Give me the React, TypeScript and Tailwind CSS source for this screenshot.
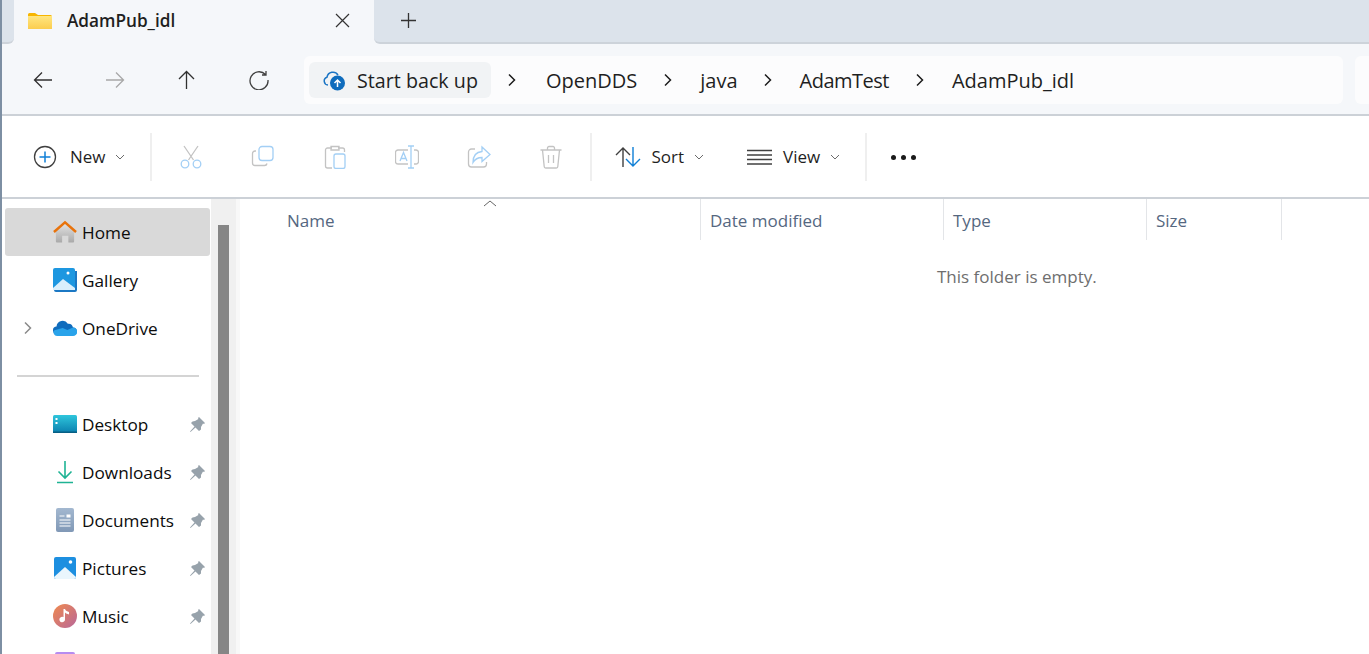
import React from "react";

const Chevron = () => (
  <svg width="10" height="6" viewBox="0 0 10 6" fill="none" stroke="#6b6b6b" strokeWidth="1" className="shrink-0">
    <path d="M1 1l4 4 4-4" />
  </svg>
);

const Crumb = ({ label, className }: { label: string; className: string }) => (
  <>
    <svg width="10" height="16" viewBox="0 0 10 16" fill="none" stroke="#1c1c1c" strokeWidth="1.5" className="shrink-0">
      <path d="M2 2.5l5.5 5.5L2 13.5" />
    </svg>
    <span className={className}>{label}</span>
  </>
);

const Pin = () => (
  <svg width="17" height="17" viewBox="0 0 17 17" fill="#97a2ab" className="ml-auto mr-[4px] shrink-0">
    <path d="M10 1l6 6-1 1-1-.4-2 3.400v2.500L10 15l-3.500-3.500-5 4.500-.5-.5 4.500-5L2 7l1.500-1.500L6 5l3.400-2L9 2z" />
  </svg>
);

const SideRow = ({ icon, label, active, caret, pin }: { icon: React.ReactNode; label?: string; active?: boolean; caret?: boolean; pin?: boolean }) => (
  <div className={`h-12 flex items-center ml-[3px] mr-px rounded-[3px] ${active ? "bg-[#d9d9d9]" : ""}`}>
    <div className="w-[47px] flex justify-center shrink-0">
      {caret && (
        <svg width="10" height="14" viewBox="0 0 10 14" fill="none" stroke="#8a8a8a" strokeWidth="1.500" className="-ml-[2px]">
          <path d="M2 1.500l5.500 5.500L2 12.500" />
        </svg>
      )}
    </div>
    <div className="w-[26px] h-[24px] flex items-center justify-center shrink-0">{icon}</div>
    {label && <span className="ml-[4px] pt-px text-[17.200px] text-[#0c0c0c]">{label}</span>}
    {pin && <Pin />}
  </div>
);

const HomeIcon = () => (
  <svg width="24" height="24" viewBox="0 0 25 24">
    <defs>
      <linearGradient id="hm" x1="0" y1="0" x2="0" y2="1">
        <stop offset="0" stopColor="#e3e3e3" />
        <stop offset="1" stopColor="#a9a9a9" />
      </linearGradient>
    </defs>
    <path d="M3 11L12.500 3 22 11v11a1 1 0 0 1-1 1h-5v-7H9.500v7H4a1 1 0 0 1-1-1z" fill="url(#hm)" />
    <path d="M1 12L12.500 2 24 12" fill="none" stroke="#e8730c" strokeWidth="2.600" />
  </svg>
);

const GalleryIcon = () => (
  <svg width="24" height="24" viewBox="0 0 24 24">
    <path d="M22 3h2v19a2 2 0 0 1-2 2H3a2 2 0 0 1-2-2h21z" fill="#1b78c4" />
    <path d="M0 2a2 2 0 0 1 2-2h18a2 2 0 0 1 2 2v20H0z" fill="#1d97e0" />
    <path d="M0 20l10-9 12 9v2H0z" fill="#d9effc" />
    <circle cx="15" cy="5" r="1.500" fill="#fff" />
  </svg>
);

const CloudIcon = () => (
  <svg width="24" height="16" viewBox="0 0 25 17">
    <path d="M4 15a4 4 0 0 1-.5-8A6.500 6.500 0 0 1 15.500 4 5 5 0 0 1 21 8a4 4 0 0 1 0 8z" fill="#0f6cbd" />
    <path d="M4 17a3.800 3.800 0 0 1-2.800-6.200L10 8.500l5 2 6-2.500a4.500 4.500 0 0 1 0 9z" fill="#29a3ea" />
  </svg>
);

const DesktopIcon = () => (
  <svg width="24" height="18" viewBox="0 0 24 18">
    <defs>
      <linearGradient id="dk" x1="0" y1="0" x2="0" y2="1">
        <stop offset="0" stopColor="#2fc6dc" />
        <stop offset="1" stopColor="#0a7fae" />
      </linearGradient>
    </defs>
    <rect width="24" height="18" rx="1.500" fill="url(#dk)" />
    <rect x="2.500" y="3" width="2" height="2" fill="#fff" />
    <rect x="2.500" y="7" width="2" height="2" fill="#fff" />
    <rect y="16.500" width="24" height="1.500" fill="#075f84" />
  </svg>
);

const DownloadIcon = () => (
  <svg width="18" height="24" viewBox="0 0 18 24" fill="none" stroke="#1fb394" strokeWidth="1.600">
    <path d="M9 1v17M2.500 11.500L9 18l6.500-6.500M1 22.500h16" />
  </svg>
);

const DocumentIcon = () => (
  <svg width="18" height="24" viewBox="0 0 18 24">
    <defs>
      <linearGradient id="dc" x1="0" y1="0" x2="0" y2="1">
        <stop offset="0" stopColor="#a3b8d0" />
        <stop offset="1" stopColor="#8098b6" />
      </linearGradient>
    </defs>
    <rect width="18" height="24" rx="2" fill="url(#dc)" />
    <path d="M3.500 8h5M3.500 12h11M3.500 15h11M3.500 18h11" stroke="#fff" strokeWidth="1" />
    <rect x="10.500" y="6.500" width="4" height="3" fill="#fff" />
  </svg>
);

const PicturesIcon = () => (
  <svg width="22" height="22" viewBox="0 0 22 22">
    <rect width="22" height="22" rx="2" fill="#1d8fe0" />
    <path d="M0 20l11-10 11 10a2 2 0 0 1-2 2H2a2 2 0 0 1-2-2z" fill="#eaf6fd" />
    <circle cx="16.500" cy="5" r="1.800" fill="#fff" />
  </svg>
);

const MusicIcon = () => (
  <svg width="24" height="24" viewBox="0 0 24 24">
    <defs>
      <linearGradient id="ms" x1="0" y1="0" x2="1" y2="1">
        <stop offset="0" stopColor="#f08a4e" />
        <stop offset="1" stopColor="#b8679a" />
      </linearGradient>
    </defs>
    <circle cx="12" cy="12" r="12" fill="url(#ms)" />
    <path d="M12 5v10.500a2.800 2.800 0 1 1-1.500-2.500V5zM12 5c.5 2 2.500 2.500 4 3v2.500c-1.500-.5-3-1-4-2z" fill="#fff" />
  </svg>
);

const VideosIcon = () => <div className="w-[20px] h-[24px] rounded-[2px] bg-[#b68cf0]" />;

const ToolIcon = ({ children }: { children: React.ReactNode }) => (
  <div className="w-[72px] flex justify-center shrink-0">
    <svg width="24" height="24" viewBox="0 0 24 24" fill="none" strokeWidth="1.300">
      {children}
    </svg>
  </div>
);

const NavButton = ({ children }: { children: React.ReactNode }) => (
  <div className="w-[72px] flex justify-center shrink-0">
    <svg width="20" height="20" viewBox="0 0 20 20" fill="none" strokeWidth="1.300">
      {children}
    </svg>
  </div>
);

const Divider = () => <div className="w-[2px] h-[48px] bg-[#efefef] shrink-0" />;

const App = () => {
  return (
    <div
      className="w-[1369px] h-[654px] overflow-hidden flex flex-col bg-white border-l-2 border-[#7d8fa3]"
      style={{ fontFamily: '"Open Sans", "Noto Sans", sans-serif' }}
    >
      {/* Tabs */}
      <div className="h-[44px] shrink-0 bg-[#f5f7fa] flex items-stretch">
        <div className="w-[12px] shrink-0 bg-[#dce3eb] border-b-2 border-[#cdd3da] rounded-br-[6px]" />
        <div className="w-[360px] bg-[#f5f7fa] rounded-t-[8px] flex items-center pl-[14px] pr-[24px] pb-[3px] shrink-0">
          <svg width="24" height="16" viewBox="0 0 24 16" className="shrink-0">
            <defs>
              <linearGradient id="fd" x1="0" y1="0" x2="0" y2="1">
                <stop offset="0" stopColor="#ffe680" />
                <stop offset="1" stopColor="#fbcd4e" />
              </linearGradient>
            </defs>
            <path d="M0 1.500A1.500 1.500 0 0 1 1.500 0h5.500l3 2h12.500A1.500 1.500 0 0 1 24 3.500V16H0z" fill="#f7b500" />
            <rect y="3" width="24" height="13" fill="url(#fd)" />
          </svg>
          <span className="ml-[15px] text-[17.200px] font-semibold text-[#1f1f1f]">AdamPub_idl</span>
          <svg width="15" height="15" viewBox="0 0 15 15" stroke="#333" strokeWidth="1.200" className="ml-auto">
            <path d="M1 1l13 13M14 1L1 14" />
          </svg>
        </div>
        <div className="flex-1 bg-[#dce3eb] border-b-2 border-[#cdd3da] rounded-bl-[6px] pl-[27px] pt-[13px]">
          <svg width="15" height="15" viewBox="0 0 15 15" stroke="#333" strokeWidth="1.300">
            <path d="M7.500 0v15M0 7.500h15" />
          </svg>
        </div>
      </div>

      {/* Navigation row */}
      <div className="h-[72px] shrink-0 bg-[#f5f7fa] border-b-2 border-[#ccd1d7] flex items-center pl-[5px] pt-[2px]">
        <NavButton>
          <path d="M19 10H1.500M9 2.500L1.500 10 9 17.500" stroke="#303030" />
        </NavButton>
        <NavButton>
          <path d="M1 10h17.500M11 2.500l7.500 7.500-7.500 7.500" stroke="#a8a8a8" />
        </NavButton>
        <NavButton>
          <path d="M9.500 19V1.500M2 9l7.500-7.500L17 9" stroke="#303030" />
        </NavButton>
        <NavButton>
          <path d="M16.500 4.500A9 9 0 1 0 19 10M17 1v4h-4" stroke="#404040" />
        </NavButton>
        <div className="ml-[9px] w-[1039px] h-[48px] bg-[#fcfcfd] rounded-[6px] flex items-center pl-[5px] shrink-0">
          <div className="w-[182px] h-[36px] bg-[#f1f3f5] rounded-[6px] flex items-center pl-[13px] shrink-0">
            <svg width="24" height="22" viewBox="0 0 24 22" fill="none" className="shrink-0">
              <path d="M6 16a4 4 0 0 1-1-7.800A6 6 0 0 1 16 6" stroke="#1a74c4" strokeWidth="1.500" />
              <circle cx="15.500" cy="14" r="7.500" fill="#0f6cbd" />
              <path d="M15.500 18v-7M12.500 14l3-3 3 3" stroke="#fff" strokeWidth="1.500" />
            </svg>
            <span className="ml-[11px] pt-px text-[19.700px] text-[#1f1f1f] whitespace-nowrap">Start back up</span>
          </div>
          <div className="ml-[16px] flex items-center text-[20px] text-[#1f1f1f] whitespace-nowrap">
            <Crumb label="OpenDDS" className="ml-[29px] mr-[26px] pt-px" />
            <Crumb label="java" className="ml-[27px] mr-[25px] pt-px" />
            <Crumb label="AdamTest" className="ml-[27px] mr-[26px] pt-px tracking-[-0.5px]" />
            <Crumb label="AdamPub_idl" className="ml-[27px] pt-px" />
          </div>
        </div>
        <div className="ml-[12px] w-[60px] h-[48px] bg-[#fcfcfd] rounded-[6px] shrink-0" />
      </div>

      {/* Command bar */}
      <div className="h-[83px] shrink-0 bg-white border-b-2 border-[#ccd1d7] flex items-center pl-[31px] pt-px text-[17px] text-[#1f1f1f]">
        <svg width="24" height="24" viewBox="0 0 24 24" fill="none" className="shrink-0">
          <circle cx="12" cy="12" r="10.500" stroke="#404040" strokeWidth="1.300" />
          <path d="M12 6.500v11M6.500 12h11" stroke="#0f7fd6" strokeWidth="1.500" />
        </svg>
        <span className="ml-[13px]">New</span>
        <div className="ml-[9px] mr-[25px] flex"><Chevron /></div>
        <Divider />
        <div className="ml-[3px] flex items-center">
          <ToolIcon>
            <g stroke="#c3c3c3"><path d="M5 1l9.500 14M19 1L9.500 15" /></g>
            <g stroke="#a3cff5"><circle cx="6" cy="19" r="3.800" /><circle cx="18" cy="19" r="3.800" /></g>
          </ToolIcon>
          <ToolIcon>
            <path d="M5 6H4a2.500 2.500 0 0 0-2.500 2.500V18A2.500 2.500 0 0 0 4 20.500h9.500a2.500 2.500 0 0 0 2.500-2" stroke="#c3c3c3" />
            <rect x="8" y="1.500" width="14" height="14" rx="3" stroke="#a3cff5" />
          </ToolIcon>
          <ToolIcon>
            <path d="M9 3H4.500A2 2 0 0 0 2.500 5v16a2 2 0 0 0 2 2H9M15 3h4.500a2 2 0 0 1 2 2v2M8 1.500h8V5H8z" stroke="#c3c3c3" />
            <rect x="11" y="9" width="11" height="14.500" rx="2" stroke="#a3cff5" />
          </ToolIcon>
          <ToolIcon>
            <path d="M13 5H3a2.500 2.500 0 0 0-2.500 2.500v9A2.500 2.500 0 0 0 3 19h10M19 5h2a2.500 2.500 0 0 1 2.500 2.500v9A2.500 2.500 0 0 1 21 19h-2" stroke="#c3c3c3" />
            <path d="M13 1h6M13 23h6M16 1v22M5 16l3.500-8.500L12 16M6.200 13.500h4.600" stroke="#a3cff5" />
          </ToolIcon>
          <ToolIcon>
            <path d="M8 4H4.500A3 3 0 0 0 1.500 7v12a3 3 0 0 0 3 3h12a3 3 0 0 0 3-3v-2" stroke="#c3c3c3" />
            <path d="M15 2l8 7.500-8 7v-4c-5 0-7 1.500-9 5 0-6 3-10.500 9-11z" stroke="#a3cff5" />
          </ToolIcon>
          <ToolIcon>
            <path d="M1.500 5h21M8.500 5V3a1.500 1.500 0 0 1 1.500-1.500h4A1.500 1.500 0 0 1 15.500 3v2M3.500 5l1.700 16.500a1.500 1.500 0 0 0 1.500 1.500h10.600a1.500 1.500 0 0 0 1.500-1.500L20.500 5M9.500 10v8M14.500 10v8" stroke="#c3c3c3" />
          </ToolIcon>
        </div>
        <div className="ml-[3px]"><Divider /></div>
        <svg width="26" height="22" viewBox="0 0 26 22" fill="none" strokeWidth="1.400" className="ml-[23px] shrink-0">
          <path d="M8 21V2M1 9l7-7 7 7" stroke="#404040" />
          <path d="M18 1v19M11 13l7 7 7-7" stroke="#0f7fd6" />
        </svg>
        <span className="ml-[11px] mr-px">Sort</span>
        <div className="ml-[9px] flex"><Chevron /></div>
        <svg width="25" height="16" viewBox="0 0 25 16" stroke="#404040" strokeWidth="1.300" className="ml-[43px] shrink-0">
          <path d="M0 1.500h25M0 6h25M0 10.500h25M0 15h25" />
        </svg>
        <span className="ml-[11px]">View</span>
        <div className="ml-[10px] mr-[25px] flex"><Chevron /></div>
        <Divider />
        <div className="ml-[24px] flex gap-[5px]">
          <div className="w-[5px] h-[5px] rounded-full bg-[#1a1a1a]" />
          <div className="w-[5px] h-[5px] rounded-full bg-[#1a1a1a]" />
          <div className="w-[5px] h-[5px] rounded-full bg-[#1a1a1a]" />
        </div>
      </div>

      <div className="flex-1 flex min-h-0">
        {/* Sidebar */}
        <div className="w-[209px] shrink-0 pt-[9px] bg-white overflow-hidden">
          <SideRow icon={<HomeIcon />} label="Home" active />
          <SideRow icon={<GalleryIcon />} label="Gallery" />
          <SideRow icon={<CloudIcon />} label="OneDrive" caret />
          <div className="h-[48px] flex items-center pl-[15px] pr-[12px]">
            <div className="h-[2px] w-full bg-[#d4d4d4]" />
          </div>
          <SideRow icon={<DesktopIcon />} label="Desktop" pin />
          <SideRow icon={<DownloadIcon />} label="Downloads" pin />
          <SideRow icon={<DocumentIcon />} label="Documents" pin />
          <SideRow icon={<PicturesIcon />} label="Pictures" pin />
          <SideRow icon={<MusicIcon />} label="Music" pin />
          <SideRow icon={<VideosIcon />} />
        </div>

        {/* Scrollbar */}
        <div className="w-[25px] shrink-0 bg-[#f0f0f0] pl-[7px] pt-[26px]">
          <div className="w-[11px] h-full bg-[#868686]" />
        </div>
        <div className="w-[4px] shrink-0 bg-[#f8f8f8]" />

        {/* File list */}
        <div className="flex-1 min-w-0 relative">
          <svg width="14" height="7" viewBox="0 0 14 7" fill="none" stroke="#666" strokeWidth="1" className="absolute left-[243px] top-px">
            <path d="M1 6l6-5 6 5" />
          </svg>
          <div className="h-[41px] flex text-[17px] text-[#55677f]">
            <div className="w-[461px] pl-[47px] pt-[2px] border-r border-[#e3e5e8] flex items-center">Name</div>
            <div className="w-[243px] pl-[9px] pt-[2px] border-r border-[#e3e5e8] flex items-center">Date modified</div>
            <div className="w-[203px] pl-[9px] pt-[2px] border-r border-[#e3e5e8] flex items-center">Type</div>
            <div className="w-[135px] pl-[9px] pt-[2px] border-r border-[#e3e5e8] flex items-center">Size</div>
          </div>
          <div className="mt-[24px] pl-[697px] text-[17px] text-[#6e6e6e] whitespace-nowrap">This folder is empty.</div>
        </div>
      </div>
    </div>
  );
};

export default App;
